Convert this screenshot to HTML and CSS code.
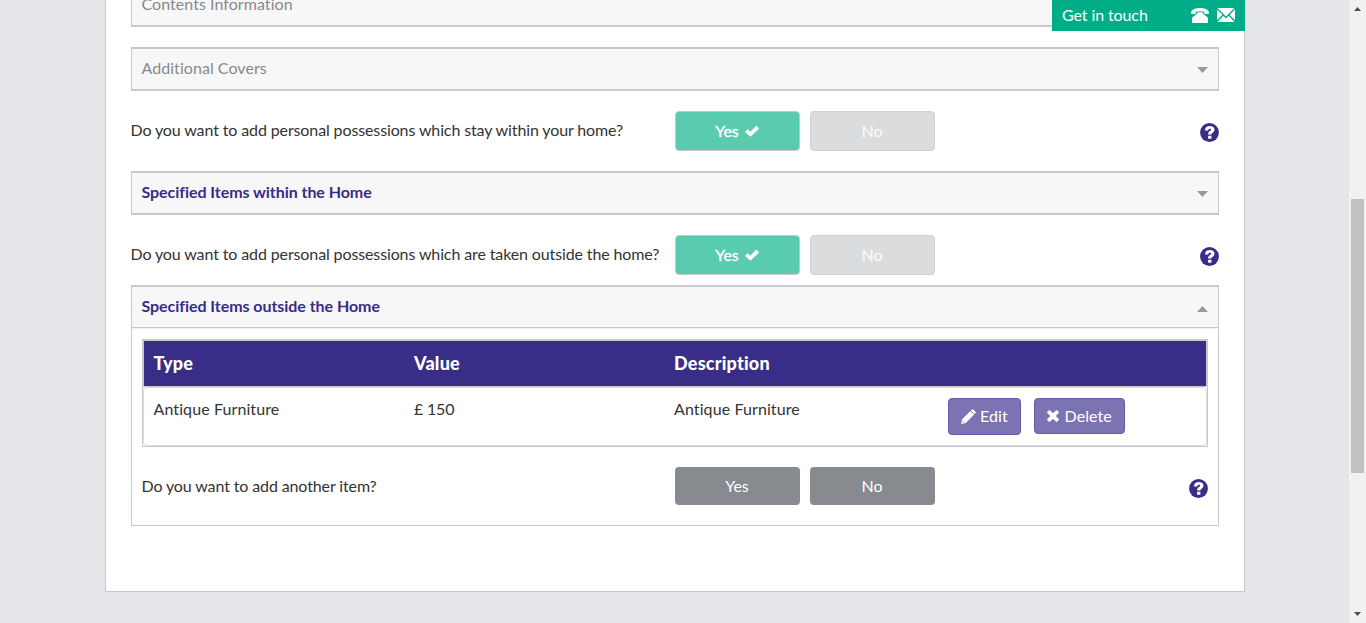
FILE: index.html
```html
<!DOCTYPE html>
<html lang="en">
<head>
<meta charset="utf-8">
<title>Home insurance quote</title>
<link rel="stylesheet" href="styles.css">
</head>
<body>
<svg class="sprite" aria-hidden="true">
  <symbol id="ok" viewBox="0 0 14 12"><path d="M.3 6.500 2.300 4.500Q2.700 4.100 3.100 4.500L5.400 6.800 10.900 1.100Q11.300.8 11.700 1.100L13.700 3.100Q14 3.500 13.700 3.900L5.900 11.300Q5.400 11.700 4.900 11.300L.3 7.300Q0 6.900.3 6.500Z"/></symbol>
  <symbol id="help" viewBox="0 0 19 19"><circle cx="9.5" cy="9.5" r="9.4" fill="#382d87"/><path d="M4.900 7.400C5.100 4.500 7 3 9.900 3c2.700 0 4.600 1.300 4.600 3.600 0 1.800-1 2.600-2.100 3.300-.8.500-1 .8-1 1.700H8.100c0-1.800.5-2.600 1.600-3.400.8-.6 1.400-.8 1.400-1.500 0-.6-.5-.9-1.300-.9-1 0-1.500.6-1.600 1.600ZM8.100 12.700h3.300v3.100H8.100Z" fill="#fff"/></symbol>
  <symbol id="phone" viewBox="0 0 18 15"><path d="M.2 5.600V3.600C1.700.9 5 0 9 0s7.300.9 8.800 3.600v2q0 .4-.4.400h-3.700q-.5 0-.5-.5V3.900Q11.500 3.300 9 3.300t-4.200.6v1.600q0 .5-.5.500H.6Q.2 6 .2 5.600ZM6.300 4.300h5.400V5.600L17 9.800v4.700q0 .5-.5.500h-15q-.5 0-.5-.5V9.800L6.300 5.600Z"/></symbol>
  <symbol id="mail" viewBox="0 0 18 14"><path d="M.6 0h16.800L9 8.600ZM0 1.200 5.400 6.700 0 12.300ZM18 1.200v11.100L12.600 6.700ZM6.300 7.700 9 10.400l2.700-2.700 5.800 6.300H.5Z"/></symbol>
  <symbol id="pencil" viewBox="0 0 15 15"><path d="M10 1.400 11 .4q.6-.5 1.100 0l2.500 2.500q.5.500 0 1.100l-1 1ZM9.400 1.900 13.100 5.600 4.800 13.900 0 15l1.100-4.800ZM2 12 1.500 13.500 3.100 13Z" fill-rule="evenodd"/></symbol>
  <symbol id="remove" viewBox="0 0 12 12"><path d="m2.900.3 3.100 3 3.100-3q.4-.3.800 0l1.800 1.800q.4.400 0 .8L8.700 6l3 3.100q.4.400 0 .8l-1.800 1.800q-.4.400-.8 0L6 8.700l-3.100 3q-.4.400-.8 0L.3 9.900q-.4-.4 0-.8l3-3.100-3-3.100q-.4-.4 0-.8L2.100.3q.4-.3.800 0Z"/></symbol>
</svg>
<div class="page">
  <main class="card">
    <aside class="touch"><span>Get in touch</span><svg class="i-phone"><use href="#phone"/></svg><svg class="i-mail"><use href="#mail"/></svg></aside>
    <section class="panel first"><h2>Contents Information</h2><i class="caret"></i></section>
    <section class="panel"><h2>Additional Covers</h2><i class="caret"></i></section>
    <div class="question">
      <label>Do you want to add personal possessions which stay within your home?</label>
      <button class="answer chosen">Yes <svg class="i-ok"><use href="#ok"/></svg></button>
      <button class="answer unchosen">No</button>
      <svg class="i-help"><use href="#help"/></svg>
    </div>
    <section class="panel active"><h2>Specified Items within the Home</h2><i class="caret"></i></section>
    <div class="question second">
      <label>Do you want to add personal possessions which are taken outside the home?</label>
      <button class="answer chosen">Yes <svg class="i-ok"><use href="#ok"/></svg></button>
      <button class="answer unchosen">No</button>
      <svg class="i-help"><use href="#help"/></svg>
    </div>
    <section class="panel active open"><h2>Specified Items outside the Home</h2><i class="caret up"></i></section>
    <div class="panel-body">
      <div class="items">
        <div class="items-head"><span>Type</span><span>Value</span><span>Description</span></div>
        <div class="items-row">
          <span>Antique Furniture</span><span class="value">£ 150</span><span>Antique Furniture</span>
          <div class="actions">
            <button class="action edit"><svg class="i-pencil"><use href="#pencil"/></svg>Edit</button>
            <button class="action delete"><svg class="i-remove"><use href="#remove"/></svg>Delete</button>
          </div>
        </div>
      </div>
      <div class="question another">
        <label>Do you want to add another item?</label>
        <button class="answer">Yes</button>
        <button class="answer">No</button>
        <svg class="i-help"><use href="#help"/></svg>
      </div>
    </div>
  </main>
</div>
<div class="scrollbar"><svg class="arrow" viewBox="0 0 7 4"><path d="M0 4 3.500 0 7 4Z"/></svg><div class="thumb"></div><svg class="arrow down" viewBox="0 0 7 4"><path d="M0 0h7L3.500 4Z"/></svg></div>
</body>
</html>
```
FILE: styles.css
```css
* { box-sizing: border-box; }
body {
  margin: 0;
  height: 623px;
  display: flex;
  overflow: hidden;
  background: #e5e6ea;
  color: #333;
  font: 16px/22px Lato, sans-serif;
}
.sprite { position: absolute; width: 0; height: 0; }
svg { display: block; flex: none; fill: currentColor; }
.page { width: 1349px; padding-left: 105px; overflow: hidden; }
.card {
  position: relative;
  display: flow-root;
  width: 1140px;
  height: 592px;
  padding: 0 25px;
  background: #fff;
  border: solid #c8c9cd;
  border-width: 0 1px 1px;
}
.touch {
  position: absolute;
  z-index: 1;
  top: 0;
  right: -1px;
  width: 193px;
  height: 31px;
  padding: 0 10px;
  display: flex;
  align-items: center;
  background: #00ad86;
  color: #fff;
}
.touch span { flex: 1; margin-bottom: 2px; letter-spacing: -0.1px; }
.i-phone { width: 18px; height: 15px; margin-right: 8px; }
.i-mail { width: 18px; height: 14px; margin-bottom: 1px; }
.panel {
  height: 44px;
  margin-bottom: 20px;
  padding: 0 10px 0 9.5px;
  display: flex;
  align-items: center;
  justify-content: space-between;
  background: #f7f7f7;
  border: solid #c8c9cd;
  border-width: 2px 1px;
  color: #87898d;
}
.panel.first { margin-top: -17px; }
.panel h2 { margin: 0 0 2px; font: inherit; font-variant-ligatures: none; letter-spacing: 0.05px; }
.panel.active { color: #382d87; }
.panel.active h2 { font-weight: 700; letter-spacing: -0.05px; }
.panel.open { height: 43px; margin-bottom: 0; border-bottom-width: 1px; }
.panel.open h2 { margin-bottom: 3px; }
.caret {
  width: 11px;
  height: 6px;
  margin-top: 2px;
  background: #999;
  clip-path: polygon(0 0, 100% 0, 50% 100%);
}
.caret.up { margin-top: 4px; clip-path: polygon(0 100%, 100% 100%, 50% 0); }
.question {
  height: 40px;
  margin-bottom: 20px;
  display: grid;
  grid-template-columns: 544px 125px 10px 125px 1fr;
}
.question.second { margin-bottom: 10px; }
.question label {
  margin: 8px 0 0 -0.5px;
  white-space: nowrap;
  letter-spacing: -0.12px;
}
.answer {
  grid-column: 2;
  padding: 0 1px 0 0;
  display: flex;
  align-items: center;
  justify-content: center;
  gap: 5px;
  border: 0;
  border-radius: 4px;
  background: #878a8e;
  color: #fff;
  font: inherit;
}
.answer + .answer { grid-column: 4; }
.answer.chosen {
  background: #59cbaf;
  border: 1px solid #c8c9cd;
  -webkit-text-stroke: 0.3px;
  gap: 6px;
}
.answer.unchosen {
  background: #dbdcde;
  border: 1px solid #cfd0d3;
  color: #f8f8f8;
  -webkit-text-stroke: 0.3px;
}
.i-ok { width: 14px; height: 12px; }
.i-help { grid-column: 5; justify-self: end; width: 19px; height: 19px; margin-top: 12px; }
.panel-body {
  height: 198px;
  padding: 11px 10px 0;
  border: solid #c8c9cd;
  border-width: 0 1px 1px;
  box-shadow: inset 0 1px #f0f0f1;
}
.items { height: 108px; border: 1px solid #c8c9cd; }
.items-head, .items-row {
  display: grid;
  grid-template-columns: 260.5px 260px 273.5px 1fr;
  font-variant-ligatures: none;
}
.items-head {
  height: 47px;
  padding: 0 0 2px 9.5px;
  align-items: center;
  background: #382d87;
  border: 1px solid #c8c9cd;
  color: #fff;
  font-size: 18px;
  font-weight: 900;
  letter-spacing: 0.2px;
}
.items-row {
  height: 59px;
  padding: 10px 0 0 9.5px;
  border: 1px solid #dcdde0;
  border-radius: 4px;
  letter-spacing: 0.1px;
}
.value { letter-spacing: -0.2px; }
.actions { margin-left: 0.5px; display: flex; align-items: flex-start; gap: 13px; }
.action {
  display: flex;
  align-items: center;
  padding: 0 0 0 12px;
  border: 1px solid #6759a8;
  border-radius: 4px;
  background: #7c74b2;
  color: #fff;
  font: inherit;
  letter-spacing: 0.1px;
}
.edit { width: 73px; height: 37px; padding-bottom: 1px; gap: 4px; }
.delete { width: 91px; height: 36px; gap: 5.5px; }
.i-pencil { width: 15px; height: 15px; }
.i-remove { width: 12px; height: 12px; }
.question.another { height: 38px; margin-top: 20px; grid-template-columns: 533px 125px 10px 125px 1fr; }
.scrollbar {
  width: 17px;
  padding: 7px 0;
  display: flex;
  flex-direction: column;
  align-items: center;
  background: #f1f1f1;
}
.arrow { width: 7px; height: 4px; fill: #505050; }
.arrow.down { margin-top: auto; }
.thumb { width: 13px; height: 274px; margin-top: 188px; background: #c1c1c1; }
```
